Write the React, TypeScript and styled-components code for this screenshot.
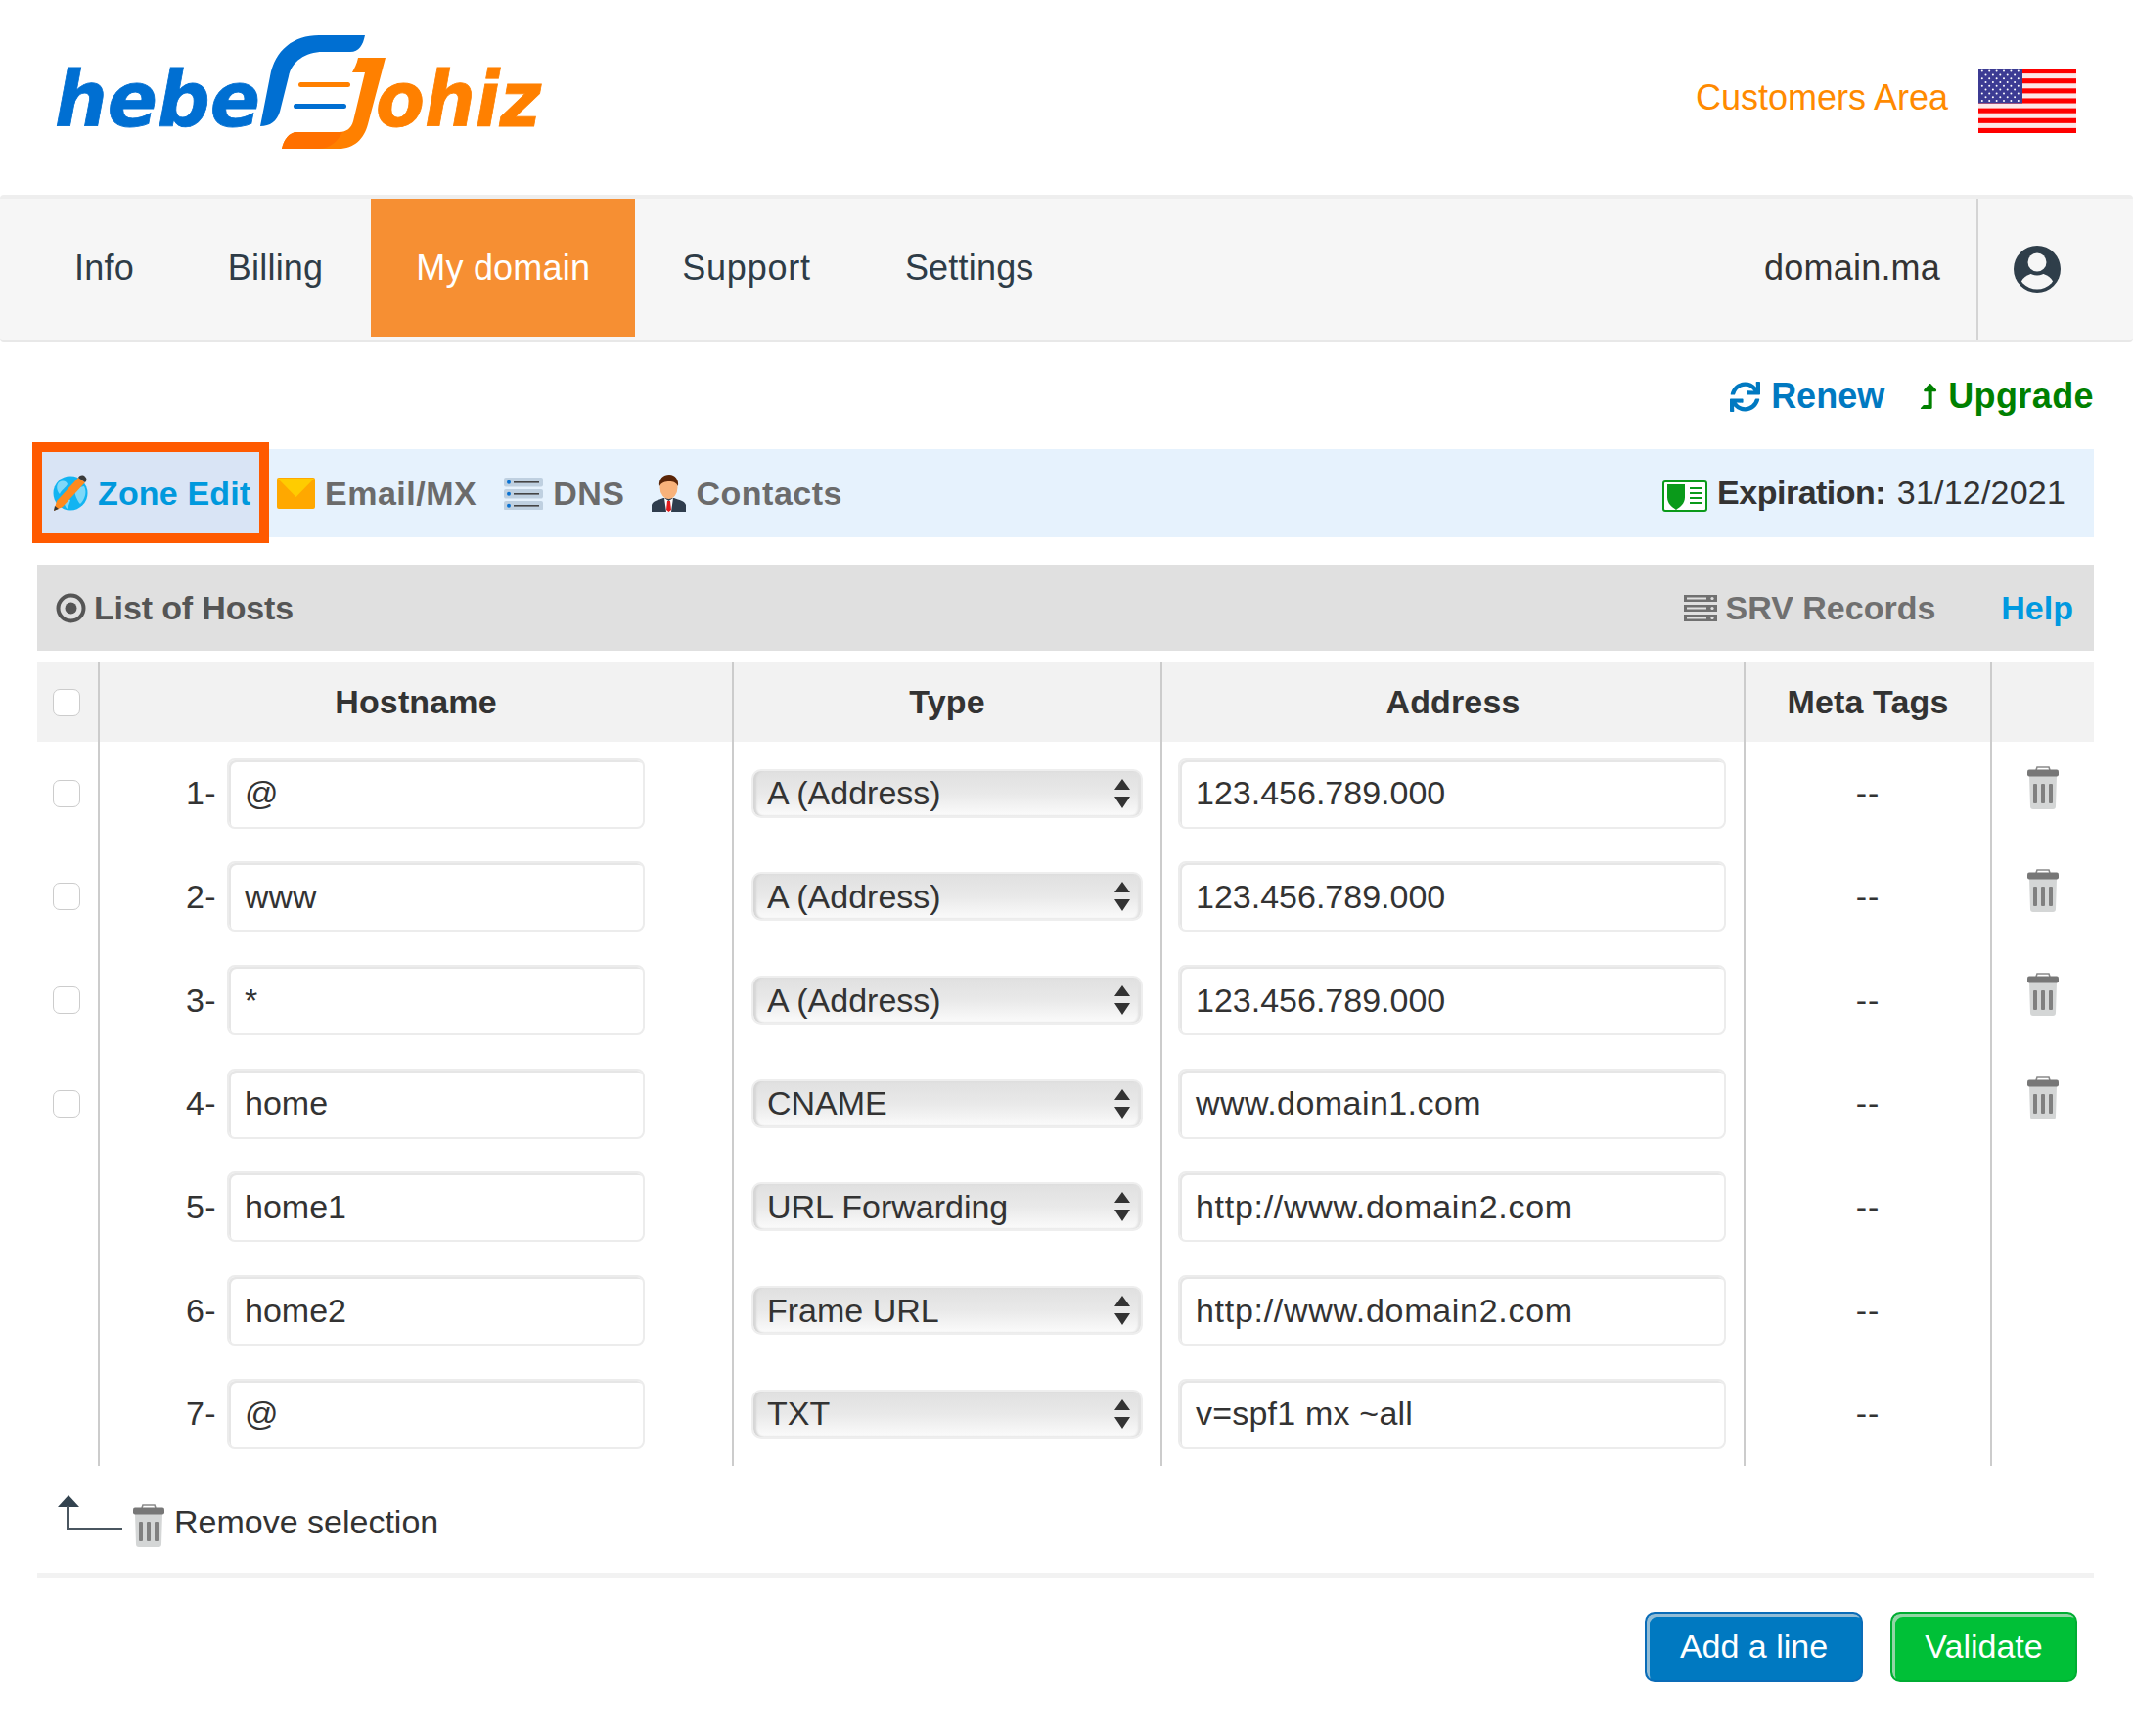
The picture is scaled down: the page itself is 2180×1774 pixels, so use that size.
import React from 'react';
import styled, { createGlobalStyle } from 'styled-components';
import { FaSync, FaLevelUpAlt } from 'react-icons/fa';

const GlobalStyle = createGlobalStyle`
html, body {
  margin: 0;
  padding: 0;
  background: #fff;
  font-family: "Liberation Sans", Arial, sans-serif;
  color: #333;
}
* { box-sizing: border-box; }
`;

const Page = styled.div`
width: 2180px;
height: 1774px;
overflow: hidden;
background: #fff;
`;

const Header = styled.header`
height: 199px;
padding: 35px 58px 0 56px;
display: flex;
justify-content: space-between;
align-items: flex-start;
`;

const LogoSvg = styled.svg`
display: block;
overflow: visible;
`;

const LangBox = styled.div`
margin-top: 35px;
display: flex;
align-items: center;
gap: 31px;
`;

const CustomersLink = styled.a`
font-size: 36px;
color: #ff8a00;
margin-bottom: 6px;
`;

const Nav = styled.nav`
height: 150px;
border-top: 4px solid #eee;
border-bottom: 2px solid #e8e8e8;
border-radius: 4px;
background: #f6f6f6;
display: flex;
align-items: flex-start;
padding-left: 28px;
`;

const NavItem = styled.a<{ $active?: boolean; $track?: number }>`
height: 141px;
display: flex;
align-items: center;
font-size: 36px;
letter-spacing: ${p => p.$track ?? 0.2}px;
padding: 0 ${p => (p.$active ? '46px' : '48px')};
margin-left: ${p => (p.$active ? '1px' : '0')};
background: ${p => (p.$active ? '#f68f33' : 'transparent')};
color: ${p => (p.$active ? '#fff' : '#2e3c47')};
`;

const NavRight = styled.div`
margin-left: auto;
display: flex;
height: 144px;
align-items: center;
`;

const DomainName = styled.span`
font-size: 36px;
letter-spacing: 0.2px;
color: #333;
padding-right: 37px;
margin-top: -2px;
`;

const UserCell = styled.div`
height: 144px;
width: 160px;
border-left: 2px solid #d4d4d4;
display: flex;
align-items: center;
padding-left: 36px;
`;

const ActionRow = styled.div`
height: 110px;
padding: 2px 40px 0 0;
display: flex;
justify-content: flex-end;
align-items: center;
gap: 32px;
`;

const ActionLink = styled.a<{ $color: string; $gap: number; $track?: number }>`
display: flex;
align-items: center;
gap: ${p => p.$gap}px;
font-size: 36px;
font-weight: bold;
letter-spacing: ${p => p.$track || 0}px;
color: ${p => p.$color};
`;

const SubNav = styled.div`
margin: 0 40px 0 38px;
height: 90px;
background: #e6f2fd;
display: flex;
align-items: center;
padding-right: 29px;
font-size: 34px;
`;

const ActiveTab = styled.a`
position: relative;
width: 232px;
height: 90px;
margin-right: 13px;
padding-left: 14px;
background: #d9e4f5;
color: #0099dd;
font-weight: bold;
letter-spacing: 0.15px;
display: flex;
align-items: center;
gap: 10px;
&::after {
  content: "";
  position: absolute;
  left: -5px;
  right: -5px;
  top: -7px;
  bottom: -6px;
  border: 10px solid #ff5a00;
}
`;

const TabLink = styled.a`
display: flex;
align-items: center;
gap: 10px;
margin-right: 28px;
color: #6b6b6b;
font-weight: bold;
letter-spacing: 0.5px;
`;

const Expiration = styled.div`
margin-left: auto;
display: flex;
align-items: center;
gap: 10px;
color: #333;
letter-spacing: 0.2px;
svg { margin-top: 6px; }
span { margin-top: -2px; }
b { margin-right: 2px; letter-spacing: -0.5px; }
`;

const ListBar = styled.div`
margin: 28px 40px 0 38px;
height: 88px;
background: #e0e0e0;
padding: 0 21px 0 19px;
display: flex;
align-items: center;
font-size: 34px;
font-weight: bold;
`;

const ListTitle = styled.div`
display: flex;
align-items: center;
gap: 8px;
color: #555;
letter-spacing: -0.15px;
`;

const SrvLink = styled.a`
margin-left: auto;
display: flex;
align-items: center;
gap: 9px;
color: #707070;
`;

const HelpLink = styled.a`
margin-left: 67px;
color: #0099e0;
`;

const HostsTable = styled.table`
margin: 12px 40px 0 38px;
width: 2102px;
table-layout: fixed;
border-collapse: separate;
border-spacing: 0;
font-size: 34px;
color: #333;
`;

const HeadCell = styled.th<{ $first?: boolean }>`
height: 81px;
padding: 0;
background: #f2f2f2;
font-weight: bold;
text-align: center;
letter-spacing: 0.15px;
border-left: ${p => (p.$first ? 'none' : '2px solid #ccc')};
`;

const BodyRow = styled.tr`
height: 105.67px;
`;

const Cell = styled.td<{ $first?: boolean }>`
padding: 0;
text-align: center;
vertical-align: middle;
border-left: ${p => (p.$first ? 'none' : '2px solid #ccc')};
`;

const Check = styled.input.attrs({ type: 'checkbox' })`
appearance: none;
display: block;
width: 28px;
height: 28px;
margin: 0 0 0 16px;
background: #fff;
border: 1.5px solid #ccc;
border-radius: 7px;
`;

const HostWrap = styled.div`
display: flex;
align-items: center;
`;

const RowNumber = styled.span`
width: 119px;
margin-right: 11px;
text-align: right;
letter-spacing: 0.4px;
`;

const Field = styled.div<{ $width: number; $left?: number; $track?: number }>`
width: ${p => p.$width}px;
height: 72px;
margin-left: ${p => p.$left || 0}px;
padding-left: 16px;
display: flex;
align-items: center;
text-align: left;
letter-spacing: ${p => p.$track || 0}px;
background: #fff;
border: 2px solid #ececec;
border-radius: 8px;
box-shadow: inset 2px 2px 0 #e6e6e6;
`;

const SelectBox = styled.div`
width: 400px;
height: 50px;
margin-left: 18px;
padding: 0 11px 0 14px;
display: flex;
align-items: center;
justify-content: space-between;
text-align: left;
background: linear-gradient(#e0e0e0, #e9e9e9 50%, #fbfbfb);
border: 2px solid #eee;
border-radius: 10px;
box-shadow: inset 3px 0 2px #d6d6d6, inset -3px 0 2px #e2e2e2;
`;

const MetaDash = styled.span`
letter-spacing: 1px;
`;

const TrashSlot = styled.div`
display: flex;
justify-content: center;
margin-bottom: 12px;
`;

const RemoveRow = styled.div`
height: 109px;
padding: 30px 0 0 59px;
display: flex;
align-items: flex-start;
font-size: 34px;
color: #333;
`;

const RemoveTrash = styled.div`
margin: 9px 10px 0 11px;
`;

const RemoveText = styled.span`
margin-top: 7px;
line-height: 40px;
`;

const Divider = styled.div`
margin: 0 40px 0 38px;
height: 6px;
background: #f2f2f2;
`;

const ButtonRow = styled.div`
margin-top: 34px;
padding-right: 57px;
display: flex;
justify-content: flex-end;
gap: 28px;
`;

const ActionButton = styled.button<{ $bg: string; $edge: string; $width: number }>`
width: ${p => p.$width}px;
height: 72px;
padding: 0;
font-family: inherit;
font-size: 34px;
color: #fff;
background: ${p => p.$bg};
border: 2px solid ${p => p.$edge};
border-radius: 10px;
box-shadow: inset 3px 3px 0 rgba(225, 225, 225, 0.65);
`;

const Logo = () => (
  <LogoSvg width="500" height="118" viewBox="0 0 500 118">
    <g transform="translate(-56 -34)">
      <g fontFamily="'DejaVu Sans', sans-serif" fontWeight="bold" fontStyle="italic" fontSize="78">
        <text x="56" y="128" fill="#006fd2" stroke="#006fd2" strokeWidth="0.8" textLength="210" lengthAdjust="spacingAndGlyphs">hebe</text>
        <text x="384" y="128" fill="#ff8000" stroke="#ff8000" strokeWidth="0.8" textLength="169" lengthAdjust="spacingAndGlyphs">ohiz</text>
      </g>
      <path d="M266 128 L276 77 C281 50 300 35 326 35 L373 35 C371 45 367 52 358 52 L330 52 C312 52 298 62 295 77 L286 113 C283 123 276 128 266 128 Z" fill="#006fd2" />
      <path d="M394 58 L366 58 C365 64 362 69 360 73 L373 73 L361 123 C359 130 354 134 347 134 L304 134 C295 134 290 142 288 151 L346 151 C362 151 372 141 376 126 Z" fill="#ff8000" />
      <path d="M288 151 C290 142 295 134 304 134 L350 134 C346 142 338 151 326 151 Z" fill="#ff7000" />
      <rect x="305" y="83" width="53" height="5" rx="2.5" fill="#ff8000" />
      <rect x="300" y="105" width="54" height="5" rx="2.5" fill="#006fd2" />
    </g>
  </LogoSvg>
);

const FlagIcon = () => {
  const stripes = Array.from({ length: 7 }, (_, i) => i);
  const rows = Array.from({ length: 9 }, (_, i) => i);
  return (
    <svg width="100" height="66" viewBox="0 0 100 66">
      <rect width="100" height="66" fill="#fde8e8" />
      {stripes.map(i => (
        <rect key={i} y={i * 10.15} width="100" height="5.1" fill="#ff0000" />
      ))}
      <rect width="45" height="35.5" fill="#3c3b93" />
      {rows.map(r =>
        Array.from({ length: r % 2 ? 5 : 6 }, (_, c) => (
          <circle key={`${r}-${c}`} cx={(r % 2 ? 7.5 : 3.8) + c * 7.4} cy={2.6 + r * 3.8} r="1" fill="#fff" />
        ))
      )}
    </svg>
  );
};

const UserIcon = () => (
  <svg width="48" height="48" viewBox="0 0 48 48">
    <defs>
      <clipPath id="userClip"><circle cx="24" cy="24" r="20.5" /></clipPath>
    </defs>
    <circle cx="24" cy="24" r="24" fill="#2f3e4a" />
    <ellipse cx="24" cy="41" rx="17" ry="13" fill="#f6f6f6" clipPath="url(#userClip)" />
    <circle cx="24" cy="17" r="13.5" fill="#2f3e4a" />
    <circle cx="24" cy="17" r="9.5" fill="#f6f6f6" />
  </svg>
);

const ZoneIcon = () => (
  <svg width="38" height="38" viewBox="0 0 38 38">
    <circle cx="20" cy="19" r="17.5" fill="#12b4f2" />
    <path d="M8 8 C13 5 16 7 17 10 C15 14 11 15 9 20 C6 17 5 12 8 8 Z M24 14 L34 12 C37 18 35 25 30 30 C27 27 24 20 24 14 Z M14 24 L20 26 L17 35 C14 33 13 28 14 24 Z" fill="#7ed8f8" />
    <path d="M28 3 L35 8 L12 33 L3 37 L6 27 Z" fill="#ff8a1e" />
    <path d="M28 3 C30 0 33 0 35 2 C37 4 37 6 35 8 Z" fill="#3a3a3a" />
    <path d="M3 37 L4 32 L8 35 Z" fill="#333" />
  </svg>
);

const EmailIcon = () => (
  <svg width="39" height="32" viewBox="0 0 39 32">
    <rect width="39" height="32" rx="2" fill="#ffa800" />
    <path d="M1 1 L38 1 L19.5 20 Z" fill="#ffcc00" />
  </svg>
);

const DnsIcon = () => (
  <svg width="40" height="33" viewBox="0 0 40 33">
    {[0, 12, 24].map(y => (
      <g key={y}>
        <rect y={y} width="40" height="9.5" rx="2" fill="#bfd0e0" />
        <circle cx="5" cy={y + 4.7} r="2" fill="#0a72d2" />
        <rect x="10" y={y + 4} width="26" height="1.6" fill="#444" />
      </g>
    ))}
  </svg>
);

const ContactIcon = () => (
  <svg width="35" height="38" viewBox="0 0 35 38">
    <path d="M0 38 L0 31 C1 27 7 26 12 24 L23 24 C28 26 34 27 35 31 L35 38 Z" fill="#2f3d4d" />
    <path d="M13 24 L17.5 27 L22 24 L20 38 L15 38 Z" fill="#fff" />
    <path d="M16 27 L19 27 L20 36 L17.5 38 L15 36 Z" fill="#e21b1b" />
    <ellipse cx="17.5" cy="13" rx="9" ry="12" fill="#f8b27a" />
    <path d="M8 12 C7 4 12 0 18 0 C24 0 28 5 27 12 C25 8 22 7 18 7 C14 7 10 8 8 12 Z" fill="#5a2507" />
  </svg>
);

const CertIcon = () => (
  <svg width="46" height="32" viewBox="0 0 46 32">
    <rect x="1" y="1" width="44" height="30" rx="2" fill="#fff" stroke="#0a9a1a" strokeWidth="2" />
    <path d="M5 4 L23 4 L23 17 C23 24 18 27 14 30 C10 27 5 24 5 17 Z" fill="#0a9a1a" />
    {[7, 12, 17, 22].map(y => (
      <rect key={y} x="28" y={y} width="13" height="2" fill="#0a9a1a" />
    ))}
  </svg>
);

const TargetIcon = () => (
  <svg width="31" height="31" viewBox="0 0 31 31">
    <circle cx="15.5" cy="15.5" r="13" fill="none" stroke="#555" strokeWidth="4" />
    <circle cx="15.5" cy="15.5" r="6" fill="#555" />
  </svg>
);

const SrvIcon = () => (
  <svg width="34" height="27" viewBox="0 0 34 27">
    {[0, 10, 20].map(y => (
      <g key={y}>
        <rect y={y} width="34" height="7" fill="#707070" />
        <rect x="3" y={y + 2.5} width="20" height="2" fill="#e0e0e0" />
        <circle cx="29" cy={y + 3.5} r="1.6" fill="#e0e0e0" />
      </g>
    ))}
  </svg>
);

const TrashIcon = () => (
  <svg width="32" height="44" viewBox="0 0 32 44">
    <path d="M9 4 L10 1 L22 1 L23 4" fill="none" stroke="#8a8a8a" strokeWidth="1.6" />
    <path d="M2 10 L30 10 L29 41 C29 43 28 44 26 44 L6 44 C4 44 3 43 3 41 Z" fill="#d4d6d6" />
    <rect y="3.5" width="32" height="7" rx="2" fill="#777" />
    <rect x="6" y="18" width="4" height="20" rx="1" fill="#808080" />
    <rect x="14" y="18" width="4" height="20" rx="1" fill="#808080" />
    <rect x="22" y="18" width="4" height="20" rx="1" fill="#808080" />
  </svg>
);

const SelectArrows = () => (
  <svg width="16" height="30" viewBox="0 0 16 30">
    <path d="M8 0 L16 11 L0 11 Z M0 18 L16 18 L8 30 Z" fill="#333" />
  </svg>
);

const CornerArrow = () => (
  <svg width="66" height="36" viewBox="0 0 66 36">
    <path d="M0 12 L11 0 L22 12 Z" fill="#33434f" />
    <path d="M10.5 11 L10.5 34.5 L66 34.5" fill="none" stroke="#4a5660" strokeWidth="3" />
  </svg>
);

const hosts = [
  { host: '@', type: 'A (Address)', address: '123.456.789.000', track: 0, removable: true },
  { host: 'www', type: 'A (Address)', address: '123.456.789.000', track: 0, removable: true },
  { host: '*', type: 'A (Address)', address: '123.456.789.000', track: 0, removable: true },
  { host: 'home', type: 'CNAME', address: 'www.domain1.com', track: 0.45, removable: true },
  { host: 'home1', type: 'URL Forwarding', address: 'http://www.domain2.com', track: 0.7, removable: false },
  { host: 'home2', type: 'Frame URL', address: 'http://www.domain2.com', track: 0.7, removable: false },
  { host: '@', type: 'TXT', address: 'v=spf1 mx ~all', track: 0.2, removable: false },
];

const App: React.FC = () => {
  return (
    <Page>
      <GlobalStyle />
      <Header>
        <Logo />
        <LangBox>
          <CustomersLink>Customers Area</CustomersLink>
          <FlagIcon />
        </LangBox>
      </Header>

      <Nav>
        <NavItem>Info</NavItem>
        <NavItem>Billing</NavItem>
        <NavItem $active>My domain</NavItem>
        <NavItem $track={0.8}>Support</NavItem>
        <NavItem>Settings</NavItem>
        <NavRight>
          <DomainName>domain.ma</DomainName>
          <UserCell><UserIcon /></UserCell>
        </NavRight>
      </Nav>

      <ActionRow>
        <ActionLink $color="#0079c1" $gap={11}><FaSync size={31} />Renew</ActionLink>
        <ActionLink $color="#008000" $gap={7} $track={0.4}><FaLevelUpAlt size={26} />Upgrade</ActionLink>
      </ActionRow>

      <SubNav>
        <ActiveTab><ZoneIcon />Zone Edit</ActiveTab>
        <TabLink><EmailIcon />Email/MX</TabLink>
        <TabLink><DnsIcon />DNS</TabLink>
        <TabLink><ContactIcon />Contacts</TabLink>
        <Expiration>
          <CertIcon />
          <span><b>Expiration:</b> 31/12/2021</span>
        </Expiration>
      </SubNav>

      <ListBar>
        <ListTitle><TargetIcon />List of Hosts</ListTitle>
        <SrvLink><SrvIcon />SRV Records</SrvLink>
        <HelpLink>Help</HelpLink>
      </ListBar>

      <HostsTable>
        <colgroup>
          <col style={{ width: 62 }} />
          <col style={{ width: 648 }} />
          <col style={{ width: 438 }} />
          <col style={{ width: 596 }} />
          <col style={{ width: 252 }} />
          <col style={{ width: 106 }} />
        </colgroup>
        <thead>
          <tr>
            <HeadCell $first><Check /></HeadCell>
            <HeadCell>Hostname</HeadCell>
            <HeadCell>Type</HeadCell>
            <HeadCell>Address</HeadCell>
            <HeadCell>Meta Tags</HeadCell>
            <HeadCell />
          </tr>
        </thead>
        <tbody>
          {hosts.map((row, i) => (
            <BodyRow key={i}>
              <Cell $first>{row.removable && <Check />}</Cell>
              <Cell>
                <HostWrap>
                  <RowNumber>{i + 1}-</RowNumber>
                  <Field $width={427}>{row.host}</Field>
                </HostWrap>
              </Cell>
              <Cell>
                <SelectBox>{row.type}<SelectArrows /></SelectBox>
              </Cell>
              <Cell>
                <Field $width={560} $left={16} $track={row.track}>{row.address}</Field>
              </Cell>
              <Cell><MetaDash>--</MetaDash></Cell>
              <Cell>{row.removable && <TrashSlot><TrashIcon /></TrashSlot>}</Cell>
            </BodyRow>
          ))}
        </tbody>
      </HostsTable>

      <RemoveRow>
        <CornerArrow />
        <RemoveTrash><TrashIcon /></RemoveTrash>
        <RemoveText>Remove selection</RemoveText>
      </RemoveRow>
      <Divider />
      <ButtonRow>
        <ActionButton $bg="#0079c1" $edge="#0a6cb8" $width={223}>Add a line</ActionButton>
        <ActionButton $bg="#00c037" $edge="#00ad32" $width={191}>Validate</ActionButton>
      </ButtonRow>
    </Page>
  );
};

export default App;
